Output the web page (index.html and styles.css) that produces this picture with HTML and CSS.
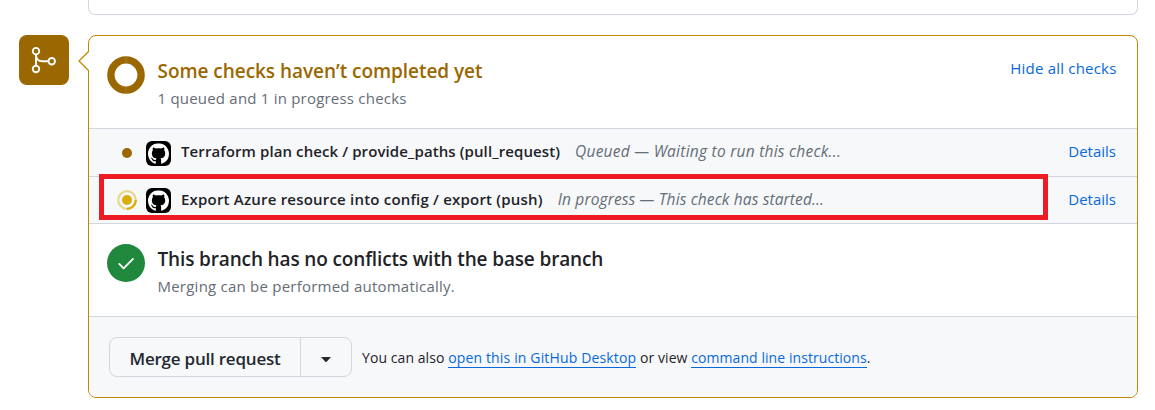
FILE: index.html
```html
<!DOCTYPE html>
<html lang="en">
<head>
<meta charset="utf-8">
<title>Merge status</title>
<link rel="stylesheet" href="styles.css">
</head>
<body>
<svg class="defs" width="0" height="0" aria-hidden="true">
  <symbol id="mark" viewBox="0 0 25 25">
    <rect width="25" height="25" rx="6" fill="#000"/>
    <svg x="2" y="2.2" width="21" height="21" viewBox="0 0 16 16"><path fill="#fff" d="M8 0C3.58 0 0 3.58 0 8c0 3.54 2.29 6.53 5.47 7.59.4.07.55-.17.55-.38 0-.19-.01-.82-.01-1.49-2.01.37-2.53-.49-2.69-.94-.09-.23-.48-.94-.82-1.13-.28-.15-.68-.52-.01-.53.63-.01 1.08.58 1.23.82.72 1.21 1.87.87 2.33.66.07-.52.28-.87.51-1.07-1.78-.2-3.64-.89-3.64-3.95 0-.87.31-1.59.82-2.15-.08-.2-.36-1.02.08-2.12 0 0 .67-.21 2.2.82.64-.18 1.32-.27 2-.27s1.36.09 2 .27c1.53-1.04 2.2-.82 2.2-.82.44 1.1.16 1.92.08 2.12.51.56.82 1.27.82 2.15 0 3.07-1.87 3.75-3.65 3.95.29.25.54.73.54 1.48 0 1.07-.01 1.93-.01 2.2 0 .21.15.46.55.38A8.01 8.01 0 0 0 16 8c0-4.42-3.58-8-8-8Z"/></svg>
  </symbol>
</svg>
<div class="previous"></div>
<main class="timeline">
  <div class="badge">
    <svg width="30" height="30" viewBox="0 0 24 24" fill="none" stroke="#fff" stroke-width="1.5"><circle cx="5.6" cy="4.9" r="2.6"/><circle cx="5.6" cy="19.2" r="2.6"/><circle cx="18.2" cy="13" r="2.6"/><path d="M5.6 7.5v9.1M5.6 7.5c0 3.6 2.2 5.5 5.2 5.5h4.8"/></svg>
  </div>
  <section class="panel">
    <svg class="pointer" width="11" height="20" viewBox="0 0 11 20"><path d="M11 0 1 10l10 10" fill="#fff" stroke="#bf8700" stroke-width="1.3"/></svg>
    <div class="summary">
      <svg class="status" width="38" height="38" viewBox="0 0 38 38"><circle cx="19" cy="19" r="15.1" fill="none" stroke="#9a6700" stroke-width="7.4"/><path d="M19 0v7.5M19 30.5V38" stroke="#b58a3c" stroke-width=".6"/></svg>
      <div class="copy">
        <h3 class="title pending"><span class="t-pending">Some checks haven’t completed yet</span></h3>
        <p class="sub"><span class="t-queued">1 queued and 1 in progress checks</span></p>
      </div>
      <a class="link toggle">Hide all checks</a>
    </div>
    <div class="checks">
      <div class="check">
        <svg class="dot" width="20" height="20" viewBox="0 0 20 20"><circle cx="10" cy="10" r="5" fill="#9a6700"/></svg>
        <svg class="avatar" width="25" height="25"><use href="#mark"/></svg>
        <strong class="name n-plan">Terraform plan check / provide_paths (pull_request)</strong>
        <em class="state s-plan">Queued — Waiting to run this check...</em>
        <a class="link details">Details</a>
      </div>
      <div class="check">
        <svg class="dot" width="20" height="20" viewBox="0 0 20 20"><circle cx="10" cy="10" r="8.8" fill="none" stroke="#ead68b" stroke-width="2.2"/><path d="M18.8 10A8.8 8.8 0 0 1 10 18.8" fill="none" stroke="#dbab0a" stroke-width="2.2"/><circle cx="10" cy="10" r="5" fill="#dbab0a"/></svg>
        <svg class="avatar" width="25" height="25"><use href="#mark"/></svg>
        <strong class="name n-export">Export Azure resource into config / export (push)</strong>
        <em class="state s-export">In progress — This check has started...</em>
        <a class="link details">Details</a>
      </div>
      <div class="highlight"></div>
    </div>
    <div class="conflicts">
      <svg class="status" width="38" height="38" viewBox="0 0 38 38"><circle cx="19" cy="19" r="19" fill="#1f883d"/><path d="m12.2 19.9 4.4 4.4 9.4-9.4" fill="none" stroke="#fff" stroke-width="1.8" stroke-linecap="round" stroke-linejoin="round"/></svg>
      <div class="copy">
        <h3 class="title"><span class="t-clean">This branch has no conflicts with the base branch</span></h3>
        <p class="sub"><span class="t-auto">Merging can be performed automatically.</span></p>
      </div>
    </div>
    <div class="actions">
      <div class="split">
        <button class="merge"><span class="t-merge">Merge pull request</span></button>
        <button class="more" aria-label="Select merge method"><svg width="10" height="5" viewBox="0 0 10 5"><path d="M0 0h10L5.6 4.7a.9.9 0 0 1-1.2 0Z" fill="#24292f"/></svg></button>
      </div>
      <p class="hint">You can also <a class="underlined desktop">open this in GitHub Desktop</a> or view <a class="underlined">command line instructions</a>.</p>
    </div>
  </section>
</main>
</body>
</html>
```

FILE: styles.css
```css
* { box-sizing: border-box; }
body {
  margin: 0;
  height: 410px;
  overflow: hidden;
  background: #fff;
  color: #1f2328;
  font: 15px/24px "Open Sans", "Noto Sans", sans-serif;
}
.defs { display: block; position: absolute; }
h3, p { margin: 0; font-weight: 400; }
.previous {
  height: 15px;
  margin: 0 17px 20px 88px;
  border: 1px solid #d0d7de;
  border-top: 0;
  border-radius: 0 0 7px 7px;
}
.timeline { display: flex; gap: 19px; padding: 0 17px 0 19px; }
.badge {
  display: flex;
  align-items: center;
  justify-content: center;
  width: 50px;
  height: 50px;
  border-radius: 8px;
  background: #9a6700;
}
.panel {
  position: relative;
  flex: 1;
  height: 363px;
  border: 1px solid #bf8700;
  border-radius: 8px;
}
.pointer { position: absolute; left: -11px; top: 15px; }
.summary, .conflicts { display: flex; padding: 20px 21px 0 18px; }
.summary { height: 92px; }
.conflicts { height: 93px; }
.status { flex: none; margin-right: 12.5px; }
.copy { flex: 1; white-space: nowrap; }
.title { margin-top: 2px; font-size: 19px; line-height: 26px; font-weight: 600; }
.pending { color: #9a6700; }
.t-pending { letter-spacing: -.045px; }
.t-clean { letter-spacing: -.145px; }
.sub { margin-top: 2px; color: #656d76; line-height: 24px; }
.t-queued { letter-spacing: .21px; }
.t-auto { letter-spacing: .23px; }
.link { color: #0969da; }
.toggle { letter-spacing: .2px; margin-right: -.5px; }
.checks { position: relative; background: #f6f8fa; }
.check {
  display: flex;
  align-items: center;
  height: 48px;
  padding: 0 21px 0 28px;
  border-top: 1px solid #d0d7de;
  white-space: nowrap;
}
.check + .check { height: 47px; }
.dot { margin-right: 9px; }
.avatar { margin: 1px 10px 0 0; }
.check + .check .avatar { margin-top: 0; }
.name { font-weight: 600; margin-right: 15px; }
.n-plan { letter-spacing: .095px; }
.n-export { letter-spacing: .2px; }
.state { color: #656d76; font-size: 15.5px; }
.s-plan { letter-spacing: .25px; }
.s-export { letter-spacing: .13px; }
.details { margin-left: auto; }
.name, .state, .details { padding-bottom: 3px; }
.check + .check :is(.name, .state, .details) { padding-bottom: 2px; }
.highlight {
  position: absolute;
  left: 10px;
  top: 46px;
  width: 949px;
  height: 46px;
  border: 5px solid #ed1c24;
}
.conflicts { border-top: 1px solid #d0d7de; }
.actions {
  display: flex;
  height: 81px;
  padding: 20px;
  border-top: 1px solid #d0d7de;
  border-radius: 0 0 7px 7px;
  background: #f6f8fa;
}
.split {
  display: flex;
  width: 243px;
  height: 40px;
  margin-right: 10px;
  border: 1px solid #d0d7de;
  border-radius: 8px;
}
.merge, .more {
  display: flex;
  align-items: center;
  justify-content: center;
  padding: 0;
  border: 0;
  background: none;
  color: #24292f;
}
.merge { width: 191px; padding-top: 3px; border-right: 1px solid #d0d7de; font: 600 17px/26px "Open Sans", "Noto Sans", sans-serif; letter-spacing: -.22px; white-space: nowrap; }
.more { flex: 1; padding-top: 4px; }
.hint { line-height: 20px; padding-top: 11px; font-size: 14px; letter-spacing: .07px; white-space: nowrap; }
.underlined { display: inline-block; height: 20px; color: #0969da; border-bottom: 1px solid #0969da; }
.desktop { letter-spacing: .15px; }
```
